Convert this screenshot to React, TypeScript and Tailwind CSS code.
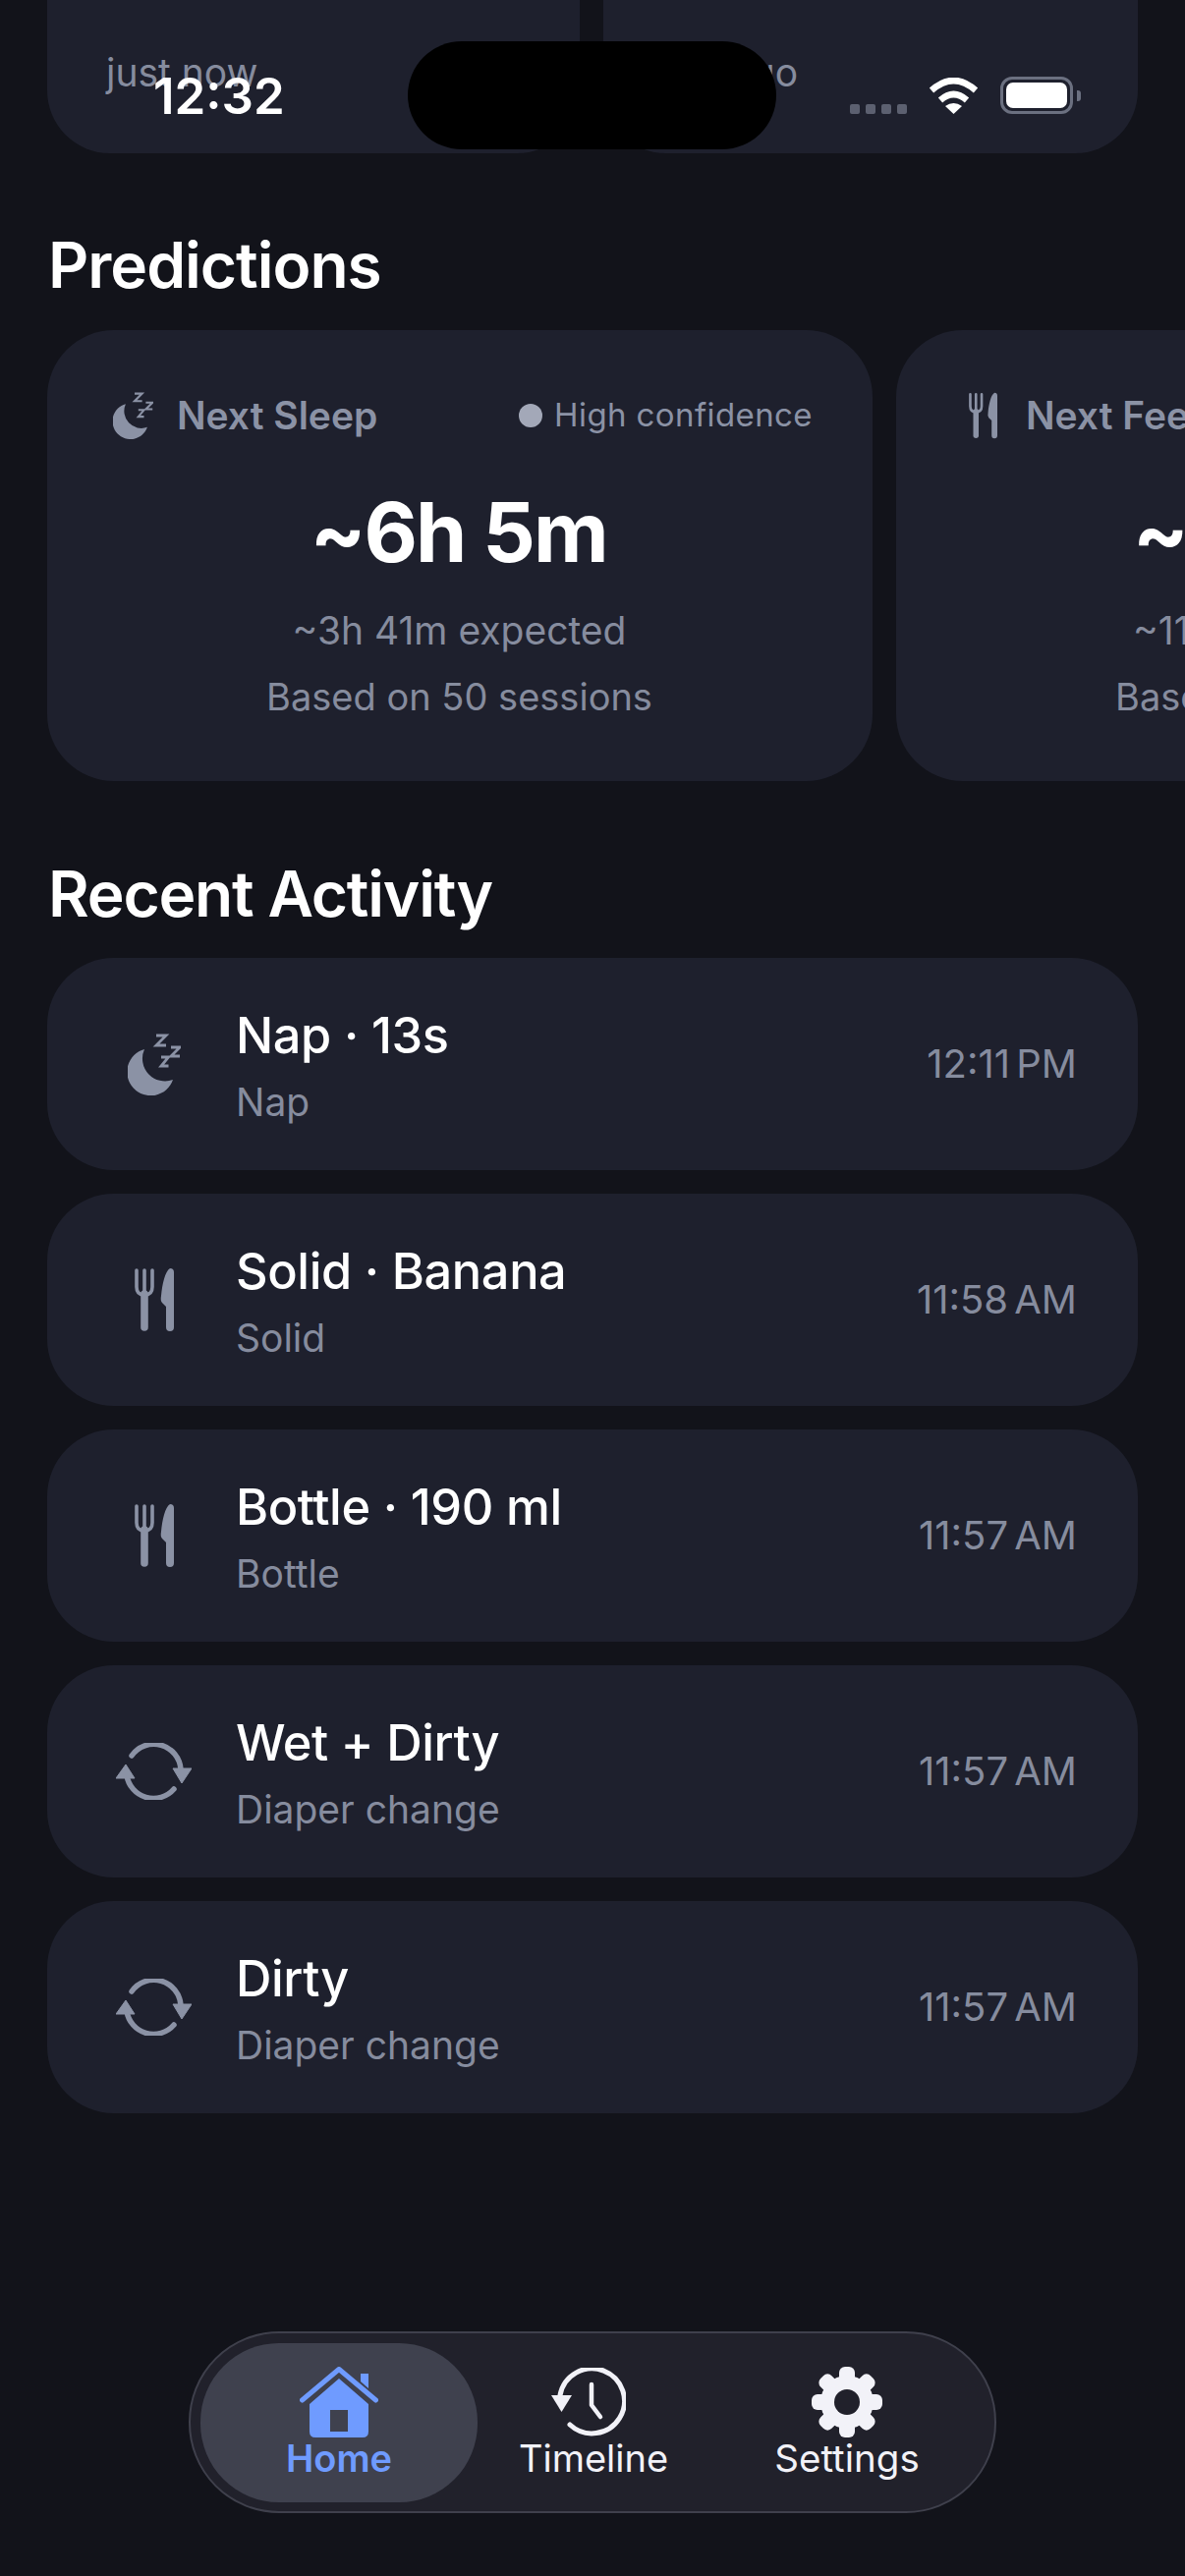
const rows = [
  { icon: 'moon', title: 'Nap · 13s', sub: 'Nap', time: '12:11 PM' },
  { icon: 'fork', title: 'Solid · Banana', sub: 'Solid', time: '11:58 AM' },
  { icon: 'fork', title: 'Bottle · 190 ml', sub: 'Bottle', time: '11:57 AM' },
  { icon: 'sync', title: 'Wet + Dirty', sub: 'Diaper change', time: '11:57 AM' },
  { icon: 'sync', title: 'Dirty', sub: 'Diaper change', time: '11:57 AM' },
];

function MoonIcon({ className }: { className: string }) {
  return (
    <svg viewBox="0 0 54 63" className={className} fill="none">
      <path d="M17 16A24 24 0 1 0 46 47A23 23 0 0 1 17 16Z" fill="#8b92a5" />
      <path
        d="M29 2H39L29 12H39M44 14H53L44 23H53M34 24H41.5L34 33H41.5"
        stroke="#8b92a5"
        strokeWidth="2.8"
        strokeLinejoin="miter"
      />
    </svg>
  );
}

function ForkIcon({ className }: { className: string }) {
  return (
    <svg viewBox="0 0 40 64" className={className} fill="none">
      <path d="M2 2V19Q2 27 10 27Q18 27 18 19V2M10 2V28" stroke="#8b92a5" strokeWidth="3.6" strokeLinecap="round" />
      <path d="M10 26V60" stroke="#8b92a5" strokeWidth="7.6" strokeLinecap="round" />
      <path d="M36 0Q40 0 40 4V60A4 4 0 0 1 32 60V39L28 35Q26 33 27 28C28 16 31 3 36 0Z" fill="#8b92a5" />
    </svg>
  );
}

function SyncIcon({ className }: { className: string }) {
  return (
    <svg viewBox="0 0 77 58" className={className} fill="none">
      <path d="M16 13A27.5 27.5 0 0 1 66 27M11 33A27.5 27.5 0 0 0 59 47" stroke="#8b92a5" strokeWidth="5.5" strokeLinecap="round" />
      <path d="M58 26H77L67 41ZM10 22L19 36H0Z" fill="#8b92a5" stroke="#8b92a5" strokeWidth="1" strokeLinejoin="round" />
    </svg>
  );
}

function RowIcon({ name }: { name: string }) {
  if (name === 'moon') return <MoonIcon className="ml-[14px] h-[63px] w-[54px]" />;
  if (name === 'fork') return <ForkIcon className="ml-[21px] h-[64px] w-[40px]" />;
  return <SyncIcon className="ml-[2px] h-[58px] w-[77px]" />;
}

function Prediction({
  icon,
  label,
  value,
  expected,
  confidence,
}: {
  icon: React.ReactNode;
  label: string;
  value: string;
  expected: string;
  confidence: boolean;
}) {
  return (
    <div className="h-[459px] w-[840px] shrink-0 rounded-[68px] bg-[#1e202d] pr-[61px] pl-[67px] pt-[63px]">
      <div className="flex h-[48px] items-center">
        {icon}
        <span className="ml-[24px] text-[39px] font-semibold whitespace-nowrap text-[#8b92a5]">{label}</span>
        {confidence && (
          <div className="ml-auto flex items-center gap-[12px]">
            <span className="h-[24px] w-[24px] rounded-full bg-[#a3a8b8]" />
            <span className="text-[33px] tracking-[0.4px] whitespace-nowrap text-[#8b92a5]">High confidence</span>
          </div>
        )}
      </div>
      <div className="mt-[49px] -ml-[9px] text-center text-[84px] leading-[92px] font-bold tracking-[-2px] whitespace-nowrap text-white">
        {value}
      </div>
      <div className="mt-[30px] -ml-[7px] text-center text-[39px] leading-[48px] whitespace-nowrap text-[#868c9e]">{expected}</div>
      <div className="mt-[19px] -ml-[7px] text-center text-[38px] leading-[48px] whitespace-nowrap text-[#868c9e]">
        Based on 50 sessions
      </div>
    </div>
  );
}

function StatusBar() {
  return (
    <div className="absolute top-0 left-0 z-20 h-[160px] w-[1206px]">
      <span className="absolute top-[68px] left-[156px] text-[51px] leading-[60px] font-semibold text-white">12:32</span>
      <div className="absolute top-[42px] left-[415px] h-[110px] w-[375px] rounded-[55px] bg-black" />
      <div className="absolute top-[106px] left-[865px] flex gap-[6px]">
        <span className="h-[10px] w-[10px] rounded-[2px] bg-[#5c6070]" />
        <span className="h-[10px] w-[10px] rounded-[2px] bg-[#5c6070]" />
        <span className="h-[10px] w-[10px] rounded-[2px] bg-[#5c6070]" />
        <span className="h-[10px] w-[10px] rounded-[2px] bg-[#5c6070]" />
      </div>
      <svg viewBox="0 0 51 37" className="absolute top-[79px] left-[945px] h-[37px] w-[51px]" fill="none">
        <path d="M3 13Q25.5 -7 48 13M12 23Q25.5 11 39 23" stroke="#fff" strokeWidth="6.5" />
        <path d="M25.5 37L17 29Q25.5 23 34 29Z" fill="#fff" />
      </svg>
      <div className="absolute top-[78px] left-[1018px] h-[38px] w-[74px] rounded-[12px] border-[3px] border-[#6b7080] p-[3px]">
        <div className="h-full w-full rounded-[7px] bg-white" />
      </div>
      <div className="absolute top-[92px] left-[1096px] h-[11px] w-[4px] rounded-r-[3px] bg-[#6b7080]" />
    </div>
  );
}

function HomeIcon() {
  return (
    <svg viewBox="0 0 80 72" className="h-[72px] w-[80px]" fill="none">
      <path d="M2.5 34L40 2.5L77.5 34" stroke="#6f9bff" strokeWidth="5" strokeLinecap="round" strokeLinejoin="round" />
      <path d="M62 7H70V22L62 15Z" fill="#6f9bff" />
      <path
        fillRule="evenodd"
        d="M40 12L70 38V66Q70 72 64 72H16Q10 72 10 66V38ZM31 44V66H49V44Z"
        fill="#6f9bff"
      />
    </svg>
  );
}

function HistoryIcon() {
  return (
    <svg viewBox="0 0 76 70" className="mr-[10px] h-[70px] w-[76px]" fill="none">
      <path d="M9 28A33 33 0 1 1 19 58" stroke="#f2f2f8" strokeWidth="5" strokeLinecap="round" />
      <path d="M41 17V38L50 50" stroke="#f2f2f8" strokeWidth="4.5" strokeLinecap="round" strokeLinejoin="round" />
      <path d="M0 28H21L10.5 45Z" fill="#f2f2f8" />
    </svg>
  );
}

function GearIcon() {
  return (
    <svg viewBox="0 0 72 72" className="h-[72px] w-[72px]">
      <circle cx="36" cy="36" r="27" fill="#f2f2f8" />
      <g fill="#f2f2f8">
        <rect x="28" y="0" width="16" height="72" rx="6" />
        <rect x="28" y="0" width="16" height="72" rx="6" transform="rotate(45 36 36)" />
        <rect x="28" y="0" width="16" height="72" rx="6" transform="rotate(90 36 36)" />
        <rect x="28" y="0" width="16" height="72" rx="6" transform="rotate(135 36 36)" />
      </g>
      <circle cx="36" cy="36" r="13" fill="#21212b" />
    </svg>
  );
}

function TabBar() {
  return (
    <div className="absolute top-[2373px] left-[192px] z-10 flex h-[185px] w-[822px] items-center rounded-[92px] border-2 border-[#3f404c] bg-[#21212b] px-[10px]">
      <div className="flex h-[162px] w-[282px] flex-col items-center rounded-[80px] bg-[#3f414e] pt-[24px]">
        <HomeIcon />
        <span className="-mt-[1px] text-[38px] leading-[44px] font-semibold text-[#6f9bff]">Home</span>
      </div>
      <div className="flex h-[162px] w-[236px] flex-col items-center pt-[25px]">
        <HistoryIcon />
        <span className="text-[38px] leading-[44px] text-[#f2f2f8]">Timeline</span>
      </div>
      <div className="flex h-[162px] w-[280px] flex-col items-center pt-[24px]">
        <GearIcon />
        <span className="-mt-[1px] text-[38.5px] leading-[44px] text-[#f2f2f8]">Settings</span>
      </div>
    </div>
  );
}

export default function App() {
  return (
    <div className="relative h-[2622px] w-[1206px] overflow-hidden bg-[#12131a] font-['Inter',sans-serif]">
      <StatusBar />
      <TabBar />

      <div className="flex h-[156px] gap-[24px] px-[48px]">
        <div className="flex w-[542px] items-end rounded-b-[64px] bg-[#1e202d] px-[60px] pb-[58px]">
          <span className="text-[39px] leading-[48px] text-[#868c9e]">just now</span>
        </div>
        <div className="flex w-[544px] items-end rounded-b-[64px] bg-[#1e202d] px-[60px] pb-[58px]">
          <span className="text-[39px] leading-[48px] text-[#868c9e]">5m ago</span>
        </div>
      </div>

      <h2 className="mt-[78px] px-[49px] text-[64px] leading-[72px] font-semibold tracking-[-1px] text-white">
        Predictions
      </h2>
      <div className="mt-[30px] flex gap-[24px] overflow-hidden pl-[48px]">
        <Prediction
          icon={<MoonIcon className="h-[48px] w-[41px]" />}
          label="Next Sleep"
          value="~6h 5m"
          expected="~3h 41m expected"
          confidence
        />
        <Prediction
          icon={<ForkIcon className="mr-[5px] ml-[7px] h-[48px] w-[29px]" />}
          label="Next Feed"
          value="~11h 14m"
          expected="~11h 48m expected"
          confidence={false}
        />
      </div>

      <h2 className="mt-[79px] px-[49px] text-[64px] leading-[72px] font-semibold tracking-[-1.2px] text-white">
        Recent Activity
      </h2>
      <div className="mt-[29px] flex flex-col gap-[24px] px-[48px]">
        {rows.map((row) => (
          <div key={row.title} className="flex h-[216px] items-center rounded-[68px] bg-[#1e202d] pr-[62px] pl-[68px]">
            <div className="flex w-[80px] shrink-0 items-center">
              <RowIcon name={row.icon} />
            </div>
            <div className="ml-[44px] min-w-0 flex-1 pt-[3px]">
              <div className="text-[50.5px] leading-[60px] font-medium tracking-[-0.4px] text-white">{row.title}</div>
              <div className="mt-[15px] text-[39px] leading-[46px] text-[#868c9e]">{row.sub}</div>
            </div>
            <span className="text-[40px] [word-spacing:-5px] whitespace-nowrap text-[#868c9e]">{row.time}</span>
          </div>
        ))}
      </div>
    </div>
  );
}
